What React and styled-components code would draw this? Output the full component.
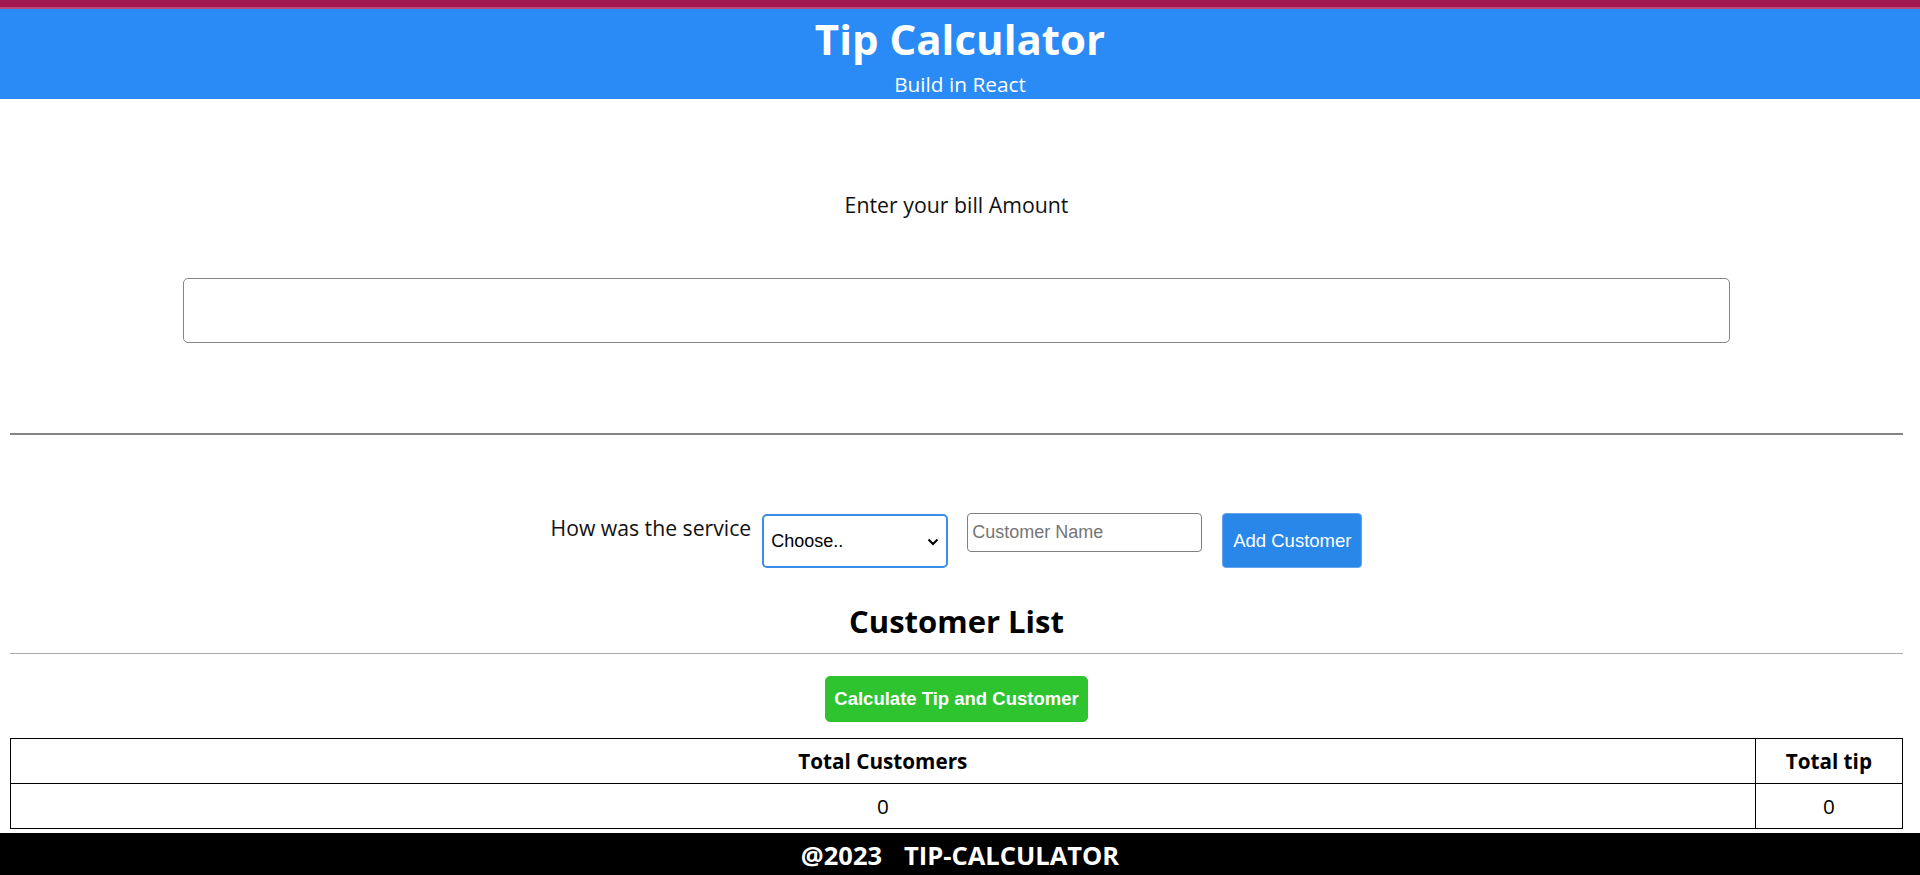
import React, { Component } from 'react';
import styled, { createGlobalStyle } from 'styled-components';

const GlobalStyle = createGlobalStyle`
  html, body {
    margin: 0;
    padding: 0;
    background: white;
    overflow: hidden;
  }
  body {
    font-family: 'Open Sans', 'Noto Sans', sans-serif;
    color: #111;
  }
`;

const Header = styled.header`
  border-top: 7px solid #a31750;
  box-shadow: inset 0 2px 0 #b6497a;
  background-color: #2a8bf6;
  color: white;
  text-align: center;
  padding: 6px 0 2px;
`;

const Title = styled.h1`
  margin: 0;
  font-size: 42px;
  line-height: 52px;
  font-weight: 700;
`;

const SubTitle = styled.div`
  margin-top: 6px;
  font-size: 20.8px;
  line-height: 26px;
`;

const Main = styled.main`
  padding: 0 17px 0 10px;
`;

const BillSection = styled.section`
  text-align: center;
`;

const Label = styled.p`
  margin: 91px 0 0;
  font-size: 21.3px;
  line-height: 30px;
`;

const BillInput = styled.input`
  display: block;
  box-sizing: content-box;
  width: 80%;
  height: 63px;
  margin: 58px auto 0;
  padding: 0 15px;
  border: 1px solid #858585;
  border-radius: 5px;
  font-size: 20px;
  outline: none;
`;

const Rule = styled.hr`
  margin: ${props => props.top}px 0 0;
  border: none;
  border-top: ${props => (props.light ? '1px solid #aaa' : '2px solid #858585')};
  height: 0;
`;

const ServiceRow = styled.div`
  display: flex;
  justify-content: center;
  align-items: flex-start;
  margin-top: 78px;
`;

const ServiceLabel = styled.span`
  font-size: 21.2px;
  line-height: 30px;
  margin-right: 11px;
`;

const SelectWrap = styled.div`
  position: relative;
  margin-top: 1px;
  margin-right: 19px;
`;

const Select = styled.select`
  appearance: none;
  box-sizing: border-box;
  width: 186px;
  height: 54px;
  padding: 0 0 0 7px;
  border: 2px solid #3a8de6;
  border-radius: 5px;
  background: white;
  font-family: 'Liberation Sans', Arial, sans-serif;
  font-size: 18px;
  color: #000;
  outline: none;
`;

const Chevron = styled.svg`
  position: absolute;
  right: 9px;
  top: 24px;
  pointer-events: none;
`;

const NameInput = styled.input`
  box-sizing: border-box;
  width: 235px;
  height: 39px;
  padding: 0 4px;
  border: 1px solid #808080;
  border-radius: 4px;
  font-family: 'Liberation Sans', Arial, sans-serif;
  font-size: 18px;
  outline: none;
  margin-right: 20px;

  &::placeholder {
    color: #757575;
  }
`;

const Button = styled.button`
  box-sizing: border-box;
  height: ${props => props.h}px;
  padding: 0 ${props => props.px}px;
  border: 1px solid ${props => props.edge};
  border-radius: ${props => props.radius}px;
  background-color: ${props => props.bg};
  color: white;
  font-family: 'Liberation Sans', Arial, sans-serif;
  font-size: ${props => props.size}px;
  font-weight: ${props => (props.bold ? 700 : 400)};
  cursor: pointer;
`;

const ListTitle = styled.h2`
  margin: 33px 0 0;
  text-align: center;
  font-size: 31px;
  line-height: 40px;
  font-weight: 700;
  color: #000;
`;

const CalcRow = styled.div`
  display: flex;
  justify-content: center;
  margin-top: 22px;
`;

const Table = styled.table`
  width: 100%;
  margin-top: 16px;
  border-collapse: collapse;
  color: #000;
`;

const Th = styled.th`
  width: ${props => (props.wide ? '100%' : 'auto')};
  padding: 0 30px;
  height: 44px;
  border: 1px solid #000;
  font-size: 20.7px;
  font-weight: 700;
  white-space: nowrap;
`;

const Td = styled.td`
  padding: 0 30px;
  height: 44px;
  border: 1px solid #000;
  text-align: center;
  font-size: 20.7px;
`;

const Footer = styled.footer`
  margin-top: 4px;
  height: 43px;
  background-color: #000;
  color: white;
  display: flex;
  justify-content: center;
  align-items: center;
  gap: 22px;
  font-size: 25.5px;
  font-weight: 700;
`;

class App extends Component {
  state = {
    bill: '',
    service: '',
    name: '',
    customers: [],
    totalCustomers: 0,
    totalTip: 0
  };

  addCustomer = () => {
    const { bill, service, name, customers } = this.state;
    if (!bill || !service || !name) return;
    const tip = (parseFloat(bill) * parseFloat(service)) / 100;
    this.setState({
      customers: [...customers, { name, tip }],
      name: '',
      service: ''
    });
  };

  calculate = () => {
    const { customers } = this.state;
    const total = customers.reduce((sum, c) => sum + c.tip, 0);
    this.setState({
      totalCustomers: customers.length,
      totalTip: Math.round(total * 100) / 100
    });
  };

  render() {
    const { bill, service, name, totalCustomers, totalTip } = this.state;

    return (
      <>
        <GlobalStyle />
        <Header>
          <Title>Tip Calculator</Title>
          <SubTitle>Build in React</SubTitle>
        </Header>
        <Main>
          <BillSection>
            <Label>Enter your bill Amount</Label>
            <BillInput
              type="number"
              value={bill}
              onChange={e => this.setState({ bill: e.target.value })}
            />
          </BillSection>
          <Rule top={90} />
          <ServiceRow>
            <ServiceLabel>How was the service</ServiceLabel>
            <SelectWrap>
              <Select
                value={service}
                onChange={e => this.setState({ service: e.target.value })}
              >
                <option value="">Choose..</option>
                <option value="20">Excellent - 20%</option>
                <option value="10">Moderate - 10%</option>
                <option value="5">Bad - 5%</option>
              </Select>
              <Chevron width="12" height="8" viewBox="0 0 12 8">
                <path d="M1.5 1.5 L6 6 L10.5 1.5" fill="none" stroke="#000" strokeWidth="2" />
              </Chevron>
            </SelectWrap>
            <NameInput
              placeholder="Customer Name"
              value={name}
              onChange={e => this.setState({ name: e.target.value })}
            />
            <Button
              h={55}
              px={10}
              size={18.5}
              radius={4}
              bg="#2887e8"
              edge="#68a6ec"
              onClick={this.addCustomer}
            >
              Add Customer
            </Button>
          </ServiceRow>
          <ListTitle>Customer List</ListTitle>
          <Rule top={12} light />
          <CalcRow>
            <Button
              h={46}
              px={8}
              size={18.5}
              radius={5}
              bg="#2dc42f"
              edge="#2dc42f"
              bold
              onClick={this.calculate}
            >
              Calculate Tip and Customer
            </Button>
          </CalcRow>
          <Table>
            <thead>
              <tr>
                <Th wide>Total Customers</Th>
                <Th>Total tip</Th>
              </tr>
            </thead>
            <tbody>
              <tr>
                <Td>{totalCustomers}</Td>
                <Td>{totalTip}</Td>
              </tr>
            </tbody>
          </Table>
        </Main>
        <Footer>
          <span>@2023</span>
          <span>TIP-CALCULATOR</span>
        </Footer>
      </>
    );
  }
}

export default App;
